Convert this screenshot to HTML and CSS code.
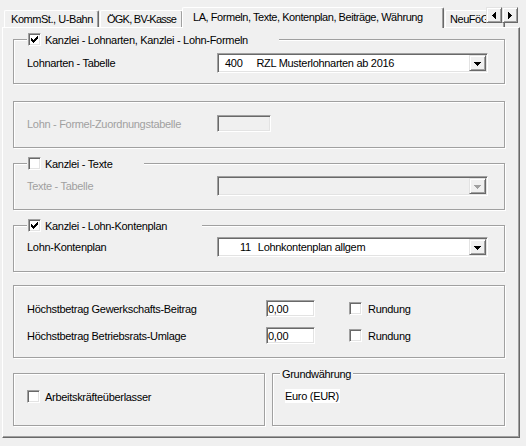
FILE: index.html
```html
<!DOCTYPE html>
<html lang="de">
<head>
<meta charset="utf-8">
<title>Kanzlei</title>
<link rel="stylesheet" href="styles.css">
</head>
<body>
<div class="window">
  <div class="tabstrip">
    <div class="tab t1">KommSt., U-Bahn</div>
    <div class="tab t2">ÖGK, BV-Kasse</div>
    <div class="tab active">LA, Formeln, Texte, Kontenplan, Beiträge, Währung</div>
    <div class="tab t4">NeuFöG</div>
    <div class="scroller">
      <div class="sbtn"><svg width="4" height="7" viewBox="0 0 4 7" shape-rendering="crispEdges"><path d="M3 0h1v7h-1z M2 1h1v5h-1z M1 2h1v3h-1z M0 3h1v1h-1z" fill="#000"/></svg></div>
      <div class="sbtn"><svg width="4" height="7" viewBox="0 0 4 7" shape-rendering="crispEdges"><path d="M0 0h1v7h-1z M1 1h1v5h-1z M2 2h1v3h-1z M3 3h1v1h-1z" fill="#000"/></svg></div>
    </div>
  </div>
  <div class="panel">
    <div class="group g1">
      <div class="legend w1">
        <span class="cb"><svg width="7" height="7" viewBox="0 0 7 7" shape-rendering="crispEdges"><path d="M6 0h1v1h-1z M5 1h2v1h-2z M0 2h1v1h-1z M4 2h3v1h-3z M0 3h2v1h-2z M3 3h3v1h-3z M0 4h5v1h-5z M1 5h3v1h-3z M2 6h1v1h-1z" fill="#000"/></svg></span>
        <span>Kanzlei - Lohnarten, Kanzlei - Lohn-Formeln</span>
      </div>
      <div class="row r1">
        <span class="label">Lohnarten - Tabelle</span>
        <div class="combo">
          <div class="value"><span class="n400">400</span><span>RZL Musterlohnarten ab 2016</span></div>
          <div class="dbtn"><svg width="7" height="4" viewBox="0 0 7 4" shape-rendering="crispEdges"><path d="M0 0h7v1h-7z M1 1h5v1h-5z M2 2h3v1h-3z M3 3h1v1h-1z" fill="#000"/></svg></div>
        </div>
      </div>
    </div>

    <div class="group g2">
      <div class="row r2">
        <span class="label disabled">Lohn - Formel-Zuordnungstabelle</span>
        <div class="tb tb-off"></div>
      </div>
    </div>

    <div class="group g3">
      <div class="legend w3">
        <span class="cb"></span>
        <span>Kanzlei - Texte</span>
      </div>
      <div class="row r3">
        <span class="label disabled">Texte - Tabelle</span>
        <div class="combo combo-off">
          <div class="value"></div>
          <div class="dbtn"><svg width="7" height="4" viewBox="0 0 7 4" shape-rendering="crispEdges"><path d="M0 0h7v1h-7z M1 1h5v1h-5z M2 2h3v1h-3z M3 3h1v1h-1z" fill="#a0a0a0"/></svg></div>
        </div>
      </div>
    </div>

    <div class="group g4">
      <div class="legend w4">
        <span class="cb"><svg width="7" height="7" viewBox="0 0 7 7" shape-rendering="crispEdges"><path d="M6 0h1v1h-1z M5 1h2v1h-2z M0 2h1v1h-1z M4 2h3v1h-3z M0 3h2v1h-2z M3 3h3v1h-3z M0 4h5v1h-5z M1 5h3v1h-3z M2 6h1v1h-1z" fill="#000"/></svg></span>
        <span>Kanzlei - Lohn-Kontenplan</span>
      </div>
      <div class="row r4">
        <span class="label">Lohn-Kontenplan</span>
        <div class="combo">
          <div class="value"><span class="n11">11</span><span>Lohnkontenplan allgem</span></div>
          <div class="dbtn"><svg width="7" height="4" viewBox="0 0 7 4" shape-rendering="crispEdges"><path d="M0 0h7v1h-7z M1 1h5v1h-5z M2 2h3v1h-3z M3 3h1v1h-1z" fill="#000"/></svg></div>
        </div>
      </div>
    </div>

    <div class="group g5">
      <div class="row r5a">
        <span class="label wide">Höchstbetrag Gewerkschafts-Beitrag</span>
        <div class="tb">0,00</div>
        <span class="cb cb-r"></span>
        <span class="rlabel">Rundung</span>
      </div>
      <div class="row r5b">
        <span class="label wide">Höchstbetrag Betriebsrats-Umlage</span>
        <div class="tb">0,00</div>
        <span class="cb cb-r"></span>
        <span class="rlabel">Rundung</span>
      </div>
    </div>

    <div class="bottom">
      <div class="group g6">
        <div class="row r6">
          <span class="cb"></span>
          <span class="alabel">Arbeitskräfteüberlasser</span>
        </div>
      </div>
      <div class="group g7">
        <div class="legend lg7">Grundwährung</div>
        <div class="row r7"><span class="sel">Euro (EUR)</span></div>
      </div>
    </div>
  </div>
</div>
</body>
</html>
```

FILE: styles.css
```css
* { box-sizing: border-box; }
html, body { margin: 0; padding: 0; }
body {
  background: #f0f0f0;
  font-family: "Liberation Sans", Arial, sans-serif;
  font-size: 11px;
  letter-spacing: -0.3px;
  color: #000;
}
.window { width: 526px; height: 446px; overflow: hidden; }

/* tabs */
.tabstrip {
  position: relative;
  height: 27px;
  display: flex;
  align-items: flex-end;
  padding-left: 4px;
}
.tab {
  flex: none;
  height: 17px;
  border-top: 1px solid #fff;
  border-left: 1px solid #fff;
  border-right: 1px solid #696969;
  border-top-left-radius: 2px;
  border-top-right-radius: 2px;
  box-shadow: inset -1px 0 0 #a0a0a0;
  display: flex;
  align-items: center;
  white-space: nowrap;
  overflow: hidden;
  line-height: 13px;
  letter-spacing: -0.45px;
  background: #f0f0f0;
}
.t1 { width: 95px; padding-left: 6px; }
.t2 { width: 83px; margin-left: 1px; padding-left: 6px; letter-spacing: -0.75px; }
.active {
  position: relative;
  z-index: 1;
  width: 262px;
  height: 21px;
  margin-left: -1px;
  margin-bottom: -1px;
  padding-left: 10px;
  padding-bottom: 2px;
}
.t4 { width: 60px; margin-left: 1px; padding-left: 4px; }
.scroller {
  position: absolute;
  left: 486px;
  top: 7px;
  display: flex;
  background: #f0f0f0;
}
.sbtn {
  width: 16px;
  height: 16px;
  border: 1px solid;
  border-color: #e3e3e3 #696969 #696969 #e3e3e3;
  box-shadow: inset 1px 1px 0 #fff, inset -1px -1px 0 #a0a0a0;
  display: flex;
  align-items: center;
  justify-content: center;
  background: #f0f0f0;
}

/* panel */
.panel {
  margin-left: 2px;
  width: 518px;
  height: 411px;
  border-top: 1px solid #fff;
  border-left: 1px solid #fff;
  border-right: 1px solid #696969;
  border-bottom: 1px solid #696969;
  box-shadow: inset -1px -1px 0 #a0a0a0;
  padding: 11px 0 0 10px;
  display: flex;
  flex-direction: column;
}

.group {
  flex: none;
  width: 492px;
  border: 1px solid #a0a0a0;
  box-shadow: inset 1px 1px 0 #fff, 1px 1px 0 #fff;
  padding-left: 13px;
  display: flex;
  flex-direction: column;
}
.g1 { height: 45px; }
.g2 { height: 47px; margin-top: 17px; }
.g3 { height: 47px; margin-top: 15px; }
.g4 { height: 47px; margin-top: 15px; }
.g5 { height: 73px; margin-top: 13px; }

.legend {
  flex: none;
  align-self: flex-start;
  display: flex;
  align-items: center;
  gap: 4px;
  height: 13px;
  margin-top: -7px;
  padding-left: 1px;
  background: #f0f0f0;
  white-space: nowrap;
}
.w1 { width: 252px; }
.w3 { width: 117px; }
.w4 { width: 175px; }

.row { flex: none; display: flex; align-items: center; }
.r1 { margin-top: 7px; }
.r2 { margin-top: 13px; }
.r3 { margin-top: 6px; }
.r4 { margin-top: 5px; }
.r5a { margin-top: 14px; }
.r5b { margin-top: 10px; }

.label { flex: none; width: 190px; white-space: nowrap; }
.label.wide { width: 239px; }
.disabled { color: #a0a0a0; }

.combo {
  flex: none;
  width: 271px;
  height: 20px;
  display: flex;
  padding: 1px;
  border: 1px solid;
  border-color: #a0a0a0 #fff #fff #a0a0a0;
  box-shadow: inset 1px 1px 0 #696969, inset -1px -1px 0 #e3e3e3;
  background: #fff;
}
.combo-off { background: #f0f0f0; }
.value {
  flex: 1;
  display: flex;
  align-items: center;
  white-space: nowrap;
  overflow: hidden;
}
.n400 { margin-left: 6px; margin-right: 14px; }
.n11 { margin-left: 21px; margin-right: 7px; }
.dbtn {
  flex: none;
  width: 17px;
  height: 16px;
  border: 1px solid;
  border-color: #e3e3e3 #696969 #696969 #e3e3e3;
  box-shadow: inset 1px 1px 0 #fff, inset -1px -1px 0 #a0a0a0;
  background: #f0f0f0;
  display: flex;
  align-items: center;
  justify-content: center;
  padding-top: 1px;
}

.tb {
  flex: none;
  width: 49px;
  height: 17px;
  border: 1px solid;
  border-color: #a0a0a0 #fff #fff #a0a0a0;
  box-shadow: inset 1px 1px 0 #696969, inset -1px -1px 0 #e3e3e3;
  background: #fff;
  padding-left: 1px;
  display: flex;
  align-items: center;
}
.tb-off { width: 54px; background: #f0f0f0; }

.cb {
  flex: none;
  width: 13px;
  height: 13px;
  border: 1px solid;
  border-color: #a0a0a0 #fff #fff #a0a0a0;
  box-shadow: inset 1px 1px 0 #696969, inset -1px -1px 0 #e3e3e3;
  background: #fff;
  display: flex;
  align-items: center;
  justify-content: center;
}
.cb-r { margin-left: 34px; }
.rlabel { margin-left: 6px; }

.bottom {
  flex: none;
  display: flex;
  gap: 7px;
  margin-top: 15px;
}
.g6 { width: 252px; height: 53px; }
.r6 { margin-top: 16px; }
.alabel { margin-left: 5px; white-space: nowrap; }
.g7 { width: 233px; height: 53px; padding-left: 0; }
.lg7 { margin-left: 7px; padding: 0 2px; gap: 0; }
.r7 { margin-top: 9px; margin-left: 12px; }
.sel { background: #fff; padding: 1px 1px 1px 0; line-height: 12px; }
```
